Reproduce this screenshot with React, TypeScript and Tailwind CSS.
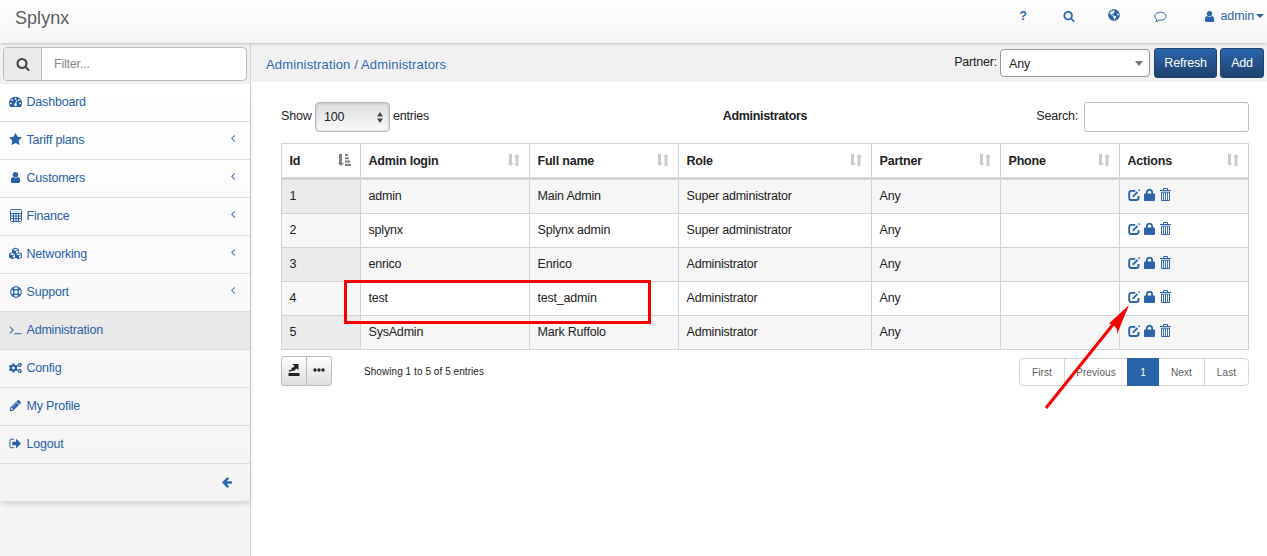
import React from "react";
import { FaCogs, FaCubes, FaRegLifeRing, FaGlobeAmericas } from "react-icons/fa";

const P = {
  search: "M1216 832q0-185-131.5-316.5t-316.5-131.5-316.5 131.5-131.5 316.5 131.5 316.5 316.5 131.5 316.5-131.5 131.5-316.5zm512 832q0 52-38 90t-90 38q-54 0-90-38l-343-342q-179 124-399 124-143 0-273.5-55.5t-225-150-150-225-55.5-273.5 55.5-273.5 150-225 225-150 273.5-55.5 273.5 55.5 225 150 150 225 55.5 273.5q0 220-124 399l343 343q37 37 37 90z",
  star: "M1728 647q0 22-26 48l-363 354 86 500q1 7 1 20 0 21-10.5 35.5t-30.5 14.5q-19 0-40-12l-449-236-449 236q-22 12-40 12-21 0-31.5-14.5t-10.5-35.5q0-6 2-20l86-500-364-354q-25-27-25-48 0-37 56-46l502-73 225-455q19-41 49-41t49 41l225 455 502 73q56 9 56 46z",
  user: "M1536 1399q0 109-62.5 187t-150.5 78h-854q-88 0-150.5-78t-62.5-187q0-85 8.5-160.5t31.5-152 58.5-131 94-89 134.5-34.5q131 128 313 128t313-128q76 0 134.5 34.5t94 89 58.5 131 31.5 152 8.5 160.5zm-256-887q0 159-112.5 271.5t-271.5 112.5-271.5-112.5-112.5-271.5 112.5-271.5 271.5-112.5 271.5 112.5 112.5 271.5z",
  gauge: "M384 1152q0-53-37.5-90.5t-90.5-37.5-90.5 37.5-37.5 90.5 37.5 90.5 90.5 37.5 90.5-37.5 37.5-90.5zm192-448q0-53-37.5-90.5t-90.5-37.5-90.5 37.5-37.5 90.5 37.5 90.5 90.5 37.5 90.5-37.5 37.5-90.5zm428 481l101-382q6-26-7.5-48.5t-38.5-29.5-48 6.5-30 39.5l-101 382q-60 5-107 43.5t-63 98.5q-20 77 20 146t117 89 146-20 89-117q16-60-6-117t-72-91zm660-33q0-53-37.5-90.5t-90.5-37.5-90.5 37.5-37.5 90.5 37.5 90.5 90.5 37.5 90.5-37.5 37.5-90.5zm-640-640q0-53-37.5-90.5t-90.5-37.5-90.5 37.5-37.5 90.5 37.5 90.5 90.5 37.5 90.5-37.5 37.5-90.5zm448 192q0-53-37.5-90.5t-90.5-37.5-90.5 37.5-37.5 90.5 37.5 90.5 90.5 37.5 90.5-37.5 37.5-90.5zm320 448q0 261-141 483-19 29-54 29h-1402q-35 0-54-29-141-221-141-483 0-182 71-348t191-286 286-191 348-71 348 71 286 191 191 286 71 348z",
  terminal: "M649 983l-466 466q-10 10-23 10t-23-10l-50-50q-10-10-10-23t10-23l393-393-393-393q-10-10-10-23t10-23l50-50q10-10 23-10t23 10l466 466q10 10 10 23t-10 23zm1079 457v64q0 14-9 23t-23 9h-960q-14 0-23-9t-9-23v-64q0-14 9-23t23-9h960q14 0 23 9t9 23z",
  pencil: "M491 1536l91-91-235-235-91 91v107h128v128h107zm523-928q0-22-22-22-10 0-17 7l-542 542q-7 7-7 17 0 22 22 22 10 0 17-7l542-542q7-7 7-17zm-54-192l416 416-832 832h-416v-416zm683 96q0 53-37 90l-166 166-416-416 166-165q36-38 90-38 53 0 91 38l235 234q37 39 37 91z",
  logout: "M704 1440q0 4 1 20t.5 26.5-3 23.5-10 19.5-20.5 6.5h-320q-119 0-203.5-84.5t-84.5-203.5v-704q0-119 84.5-203.5t203.5-84.5h320q13 0 22.5 9.5t9.5 22.5q0 4 1 20t.5 26.5-3 23.5-10 19.5-20.5 6.5h-320q-66 0-113 47t-47 113v704q0 66 47 113t113 47h312l11.5 1 11.5 3 8 5.5 7 9 2 13.5zm928-544q0 26-19 45l-544 544q-19 19-45 19t-45-19-19-45v-288h-448q-26 0-45-19t-19-45v-384q0-26 19-45t45-19h448v-288q0-26 19-45t45-19 45 19l544 544q19 19 19 45z",
  arrow: "M1664 896v128q0 53-32.5 90.5t-84.5 37.5h-704l293 294q38 36 38 90t-38 90l-75 76q-37 37-90 37-52 0-91-37l-651-652q-37-37-37-90 0-52 37-91l651-650q38-38 91-38 52 0 90 38l75 74q38 38 38 91t-38 91l-293 293h704q52 0 84.5 37.5t32.500 90.5z",
  angle: "M1203 544q0 13-10 23l-393 393 393 393q10 10 10 23t-10 23l-50 50q-10 10-23 10t-23-10l-466-466q-10-10-10-23t10-23l466-466q10-10 23-10t23 10l50 50q10 10 10 23z",
};

function Glyph({ d, className = "size-[13px]" }: { d: string; className?: string }) {
  return (
    <svg viewBox="0 0 1792 1792" className={`shrink-0 ${className}`} fill="currentColor">
      <path d={d} />
    </svg>
  );
}

function Calculator() {
  return (
    <svg viewBox="0 0 12 13" className="h-[13px] w-3 shrink-0" fill="none" stroke="currentColor">
      <rect x=".5" y=".5" width="11" height="12" rx=".8" />
      <path d="M1 4.500h10" />
      <path d="M3.500 4.500v8M6 4.500v8M8.500 4.500v8M1 7h10M1 9.700h10" strokeWidth="1" />
      <path d="M2 2.500h8" strokeWidth=".6" opacity=".4" />
    </svg>
  );
}

function SortBoth() {
  return (
    <svg viewBox="0 0 12 12" className="h-3 w-3" fill="#cbcbcb">
      <path d="M1 0h3v9h2l-3.200 3L0 9h1zM7.500 12h3V3H12L9 0 6 3h1.500z" />
    </svg>
  );
}

function SortAsc() {
  return (
    <svg viewBox="0 0 13 12" className="h-3 w-[13px]" fill="#808080">
      <path d="M1 0h3v9h2l-3.200 3L0 9h1zM7 0h3v2H7zM7 3.200h3.800v2H7zM7 6.400h5v2H7zM7 9.700h6v2.200H7z" />
    </svg>
  );
}

function RowActions() {
  return (
    <div className="flex items-center text-[#2a65ab]">
      <svg viewBox="0 0 12 12" className="size-3" fill="none" stroke="currentColor">
        <path d="M7.300 1.900H3.200A2 2 0 0 0 1.200 3.900v5.100a2 2 0 0 0 2 2h5.300a2 2 0 0 0 2-2V7" strokeWidth="1.900" />
        <path d="M5.400 7.200 9.500 3" strokeWidth="1.800" />
        <path d="M4.300 8.300 4.900 6 6.700 7.700zM10 1l1-1 1.200 1.200-1 1z" fill="currentColor" stroke="none" />
      </svg>
      <svg viewBox="0 0 11 12" className="ml-[4px] h-3 w-[11px]">
        <path d="M2.800 5V3.400a2.700 2.700 0 0 1 5.400 0V5" fill="none" stroke="currentColor" strokeWidth="1.800" />
        <rect y="4.600" width="11" height="7.400" rx=".8" fill="currentColor" />
      </svg>
      <svg viewBox="0 0 11 13" className="-mt-px ml-[5px] h-[13px] w-[11px]" fill="none" stroke="currentColor">
        <path d="M0 2.500h11M3.500 2V.5h4V2" />
        <path d="M1.500 4v8.500h8V4M1.200 4.200h8.600" />
        <path d="M3.500 4.500v8M5.500 4.500v8M7.500 4.500v8" strokeWidth=".9" />
      </svg>
    </div>
  );
}

const nav: { label: string; icon: React.ReactNode; sub?: boolean; active?: boolean }[] = [
  { label: "Dashboard", icon: <Glyph d={P.gauge} /> },
  { label: "Tariff plans", icon: <Glyph d={P.star} />, sub: true },
  { label: "Customers", icon: <Glyph d={P.user} />, sub: true },
  { label: "Finance", icon: <Calculator />, sub: true },
  { label: "Networking", icon: <FaCubes className="h-[13px] w-[15px] shrink-0" />, sub: true },
  { label: "Support", icon: <FaRegLifeRing className="size-3 shrink-0" />, sub: true },
  { label: "Administration", icon: <Glyph d={P.terminal} />, active: true },
  { label: "Config", icon: <FaCogs className="h-3 w-[13px] shrink-0" /> },
  { label: "My Profile", icon: <Glyph d={P.pencil} /> },
  { label: "Logout", icon: <Glyph d={P.logout} /> },
];

const heads = ["Id", "Admin login", "Full name", "Role", "Partner", "Phone", "Actions"];
const rows = [
  ["1", "admin", "Main Admin", "Super administrator", "Any", ""],
  ["2", "splynx", "Splynx admin", "Super administrator", "Any", ""],
  ["3", "enrico", "Enrico", "Administrator", "Any", ""],
  ["4", "test", "test_admin", "Administrator", "Any", ""],
  ["5", "SysAdmin", "Mark Ruffolo", "Administrator", "Any", ""],
];
const cols = "grid grid-cols-[79px_169px_149px_193px_129px_119px_129px]";
const button =
  "flex h-[30px] items-center justify-center rounded-[3px] border border-[#1c4471] bg-linear-to-b from-[#2a66ac] to-[#1d4270] text-white";

export default function App() {
  return (
    <div className="relative flex h-[556px] w-[1267px] flex-col overflow-hidden bg-white font-['Liberation_Sans',Arial,sans-serif] text-[12.5px] leading-[18px] tracking-[-0.2px] text-[#222]">
      <header className="relative z-10 flex h-[43px] shrink-0 justify-between bg-linear-to-b from-white to-[#f5f5f5] shadow-[0_1px_3px_rgba(0,0,0,0.2)]">
        <div className="pl-[15px] pt-[8px] text-[18px] leading-5 tracking-[0.05px] text-[#5c5c5c]">Splynx</div>
        <div className="flex h-8 items-center pr-[3px] text-[#2a65ab]">
          <span className="w-[9px] text-center text-[12px] font-bold">?</span>
          <Glyph d={P.search} className="ml-9 size-[12px]" />
          <FaGlobeAmericas className="-mt-[2px] ml-[33px] size-3" />
          <svg viewBox="0 0 13 12" className="ml-[34px] mt-px h-3 w-[13px]" fill="none" stroke="currentColor">
            <path d="M6.500 1.200C3.300 1.200.8 2.900.8 5.200c0 1.300.8 2.500 2.100 3.200-.2 1-.6 1.700-1.100 2.300 1.500-.3 2.600-.9 3.400-1.700 4.100.5 7-1.400 7-3.800 0-2.300-2.500-4-5.700-4z" />
          </svg>
          <Glyph d={P.user} className="ml-[36px] size-[13px]" />
          <span className="ml-[4px] tracking-[-0.1px]">admin</span>
          <svg viewBox="0 0 8 4" className="ml-[2px] h-1 w-[8px]" fill="currentColor"><path d="M0 0h8L4 4z" /></svg>
        </div>
      </header>

      <div className="flex min-h-0 flex-1">
        <aside className="w-[251px] shrink-0 border-r border-[#d5d5d5] bg-[#f5f5f5]">
          <div className="h-[41px] bg-[#f1f1f1] px-[3px] pt-1">
            <div className="flex h-[34px] w-[244px] overflow-hidden rounded-[4px] border border-[#bbb] bg-white">
              <div className="flex w-[38px] items-center justify-center border-r border-[#bbb] bg-[#eaeaea] text-[#444]">
                <Glyph d={P.search} className="size-[14px]" />
              </div>
              <span className="pl-3 pt-[7px] text-[#858585]">Filter...</span>
            </div>
          </div>
          <nav className="rounded-b-[3px] bg-linear-to-b from-white to-[#f4f4f4] shadow-[0_2px_5px_rgba(0,0,0,0.15)]">
            {nav.map((n) => (
              <a key={n.label} className={`flex h-[38px] items-center border-b border-[#ddd] text-[#2861a8] ${n.active ? "bg-[#e9e9e9]" : ""}`}>
                <span className="-mt-[2px] ml-2 flex w-[15px] justify-center">{n.icon}</span>
                <span className="-mt-[2px] ml-[3.5px] flex-1">{n.label}</span>
                {n.sub && <Glyph d={P.angle} className="mr-[11px] -mt-[5px] size-[12px]" />}
              </a>
            ))}
            <a className="flex h-[38px] items-center justify-end border-b border-[#ddd] pb-[2px] pr-[17px] text-[#2a65ab]">
              <Glyph d={P.arrow} className="size-[12px]" />
            </a>
          </nav>
        </aside>

        <main className="min-w-0 flex-1">
          <div className="flex h-[39px] justify-between rounded-bl-[3px] bg-[#f1f1f1] pl-[15px] pr-[3px]">
            <span className="pt-[13px] text-[13px] tracking-[0.15px] text-[#2f69b0]">Administration / Administrators</span>
            <div className="flex pt-[5px]">
              <span className="mr-[3px] pt-[5px]">Partner:</span>
              <div className="mt-px flex h-[28px] w-[150px] items-center justify-between rounded-[4px] border border-[#999] bg-white pl-2 pr-[6px]">
                <span className="pt-px">Any</span>
                <svg viewBox="0 0 8 5" className="h-[5px] w-2" fill="#777"><path d="M0 0h8L4 5z" /></svg>
              </div>
              <button className={`${button} ml-1 w-[63px]`}>Refresh</button>
              <button className={`${button} ml-[3px] w-[44px]`}>Add</button>
            </div>
          </div>

          <div className="ml-[30px] w-[968px]">
            <div className="grid h-[61px] grid-cols-3 pt-5">
              <div className="flex">
                <span className="w-[34px] pt-[5px]">Show</span>
                <div className="flex h-[30px] w-[75px] items-center justify-between rounded-[4px] border border-[#bbb] bg-linear-to-b from-[#dedede] to-[#fafafa] pl-2 pr-[6px] shadow-[inset_0_0_3px_rgba(0,0,0,0.2)]">
                  <span>100</span>
                  <svg viewBox="0 0 6 11" className="h-[11px] w-[6px]" fill="#444"><path d="M0 4.500h6L3 0zM0 6.500h6L3 11z" /></svg>
                </div>
                <span className="ml-[3px] pt-[5px]">entries</span>
              </div>
              <div className="pt-[5px] text-center font-bold tracking-[-0.32px]">Administrators</div>
              <div className="flex justify-end">
                <span className="mr-[6px] pt-[5px]">Search:</span>
                <div className="h-[30px] w-[165px] rounded-[3px] border border-[#bbb]" />
              </div>
            </div>

            <div className="border-l border-t border-[#d3d3d3]">
              <div className={cols}>
                {heads.map((h, i) => (
                  <div key={h} className="flex h-[36px] items-center justify-between border-b-3 border-r border-[#d3d3d3] border-b-[#d3d3d3] pb-px pl-[7.5px] pr-[9px] font-bold">
                    <span className="pt-px">{h}</span>
                    {i === 0 ? <SortAsc /> : <SortBoth />}
                  </div>
                ))}
              </div>
              {rows.map((r, ri) => (
                <div key={r[0]} className={`${cols} ${ri % 2 === 0 ? "bg-[#f6f6f6]" : "bg-white"}`}>
                  {r.map((c, ci) => (
                    <div key={ci} className={`flex h-[34px] items-center border-b border-r border-[#d3d3d3] pb-[2px] pl-[7.5px] ${ci === 0 ? (ri % 2 === 0 ? "bg-[#ebebeb]" : "bg-[#f7f7f7]") : ""}`}>
                      {c}
                    </div>
                  ))}
                  <div className="flex h-[34px] items-center border-b border-r border-[#d3d3d3] pb-[3px] pl-[7.5px]">
                    <RowActions />
                  </div>
                </div>
              ))}
            </div>

            <div className="flex pt-[6px]">
              <div className="flex h-[30px] w-[51px] rounded-[3px] border border-[#bbb] bg-linear-to-b from-white to-[#ddd]">
                <div className="flex w-[25px] items-center justify-center border-r border-[#bbb] text-[#222]">
                  <svg viewBox="0 0 12 12" className="-mt-[2px] size-3" fill="currentColor">
                    <path d="M.5 9h11v3H.5zM4 0h6.500v6L8.600 4.400 5.500 7.300 4.800 6.700H3L2 8 .8 7.600l.6-1.500 2-.4V4.500L4 3.400h1.600l.8-1.600z" />
                  </svg>
                </div>
                <div className="flex flex-1 items-center justify-center">
                  <svg viewBox="0 0 12 4" className="-mt-[3px] h-1 w-3" fill="#222"><circle cx="2" cy="2" r="1.700" /><circle cx="6" cy="2" r="1.700" /><circle cx="10" cy="2" r="1.700" /></svg>
                </div>
              </div>
              <span className="ml-8 pt-[7px] text-[10px] tracking-[0.060px]">Showing 1 to 5 of 5 entries</span>
              <div className="ml-auto mt-[2px] flex h-[28px] rounded-[4px] border border-[#d5d5d5] text-[10px] leading-[28px] tracking-[0.1px] text-[#5c5c5c]">
                <span className="w-[45px] border-r border-[#d5d5d5] text-center">First</span>
                <span className="w-[62px] text-center">Previous</span>
                <span className="-my-px w-8 bg-[#2a65ab] pt-px text-center text-white">1</span>
                <span className="w-[46px] border-r border-[#d5d5d5] text-center">Next</span>
                <span className="w-[43px] text-center">Last</span>
              </div>
            </div>
          </div>
        </main>
      </div>

      <div className="absolute left-[344px] top-[280px] h-[44px] w-[307px] border-3 border-[#f60000]" />
      <svg viewBox="0 0 90 112" className="absolute left-[1042px] top-[301px] h-[112px] w-[90px]">
        <path d="M4 107 73 21" stroke="#f60000" strokeWidth="3" fill="none" />
        <path d="M87 4 67 22.500l4 .8 4 5 0 5z" fill="#f60000" />
      </svg>
    </div>
  );
}
